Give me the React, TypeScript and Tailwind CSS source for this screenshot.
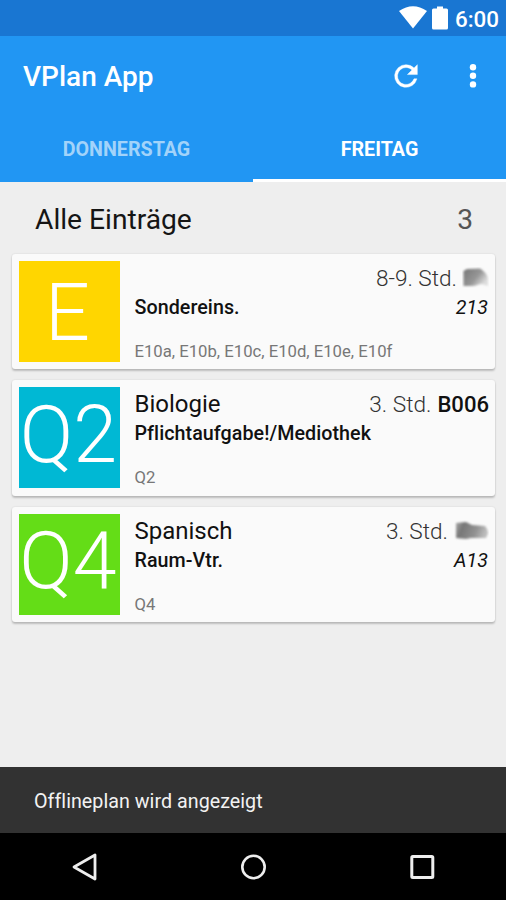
import type { ReactNode } from "react";

type Entry = {
  grade: string;
  gradeClass: string;
  tile: string;
  subject: string;
  lesson: string;
  teacher: ReactNode;
  info: string;
  room: string;
  classes: string;
};

function SmudgeA() {
  return (
    <svg width="27" height="22" viewBox="0 0 27 22" className="ml-[5px] shrink-0 self-center">
      <defs>
        <linearGradient id="sa" x1="0" y1="0" x2="1" y2="0.6">
          <stop offset="0" stopColor="#777" />
          <stop offset="0.6" stopColor="#969696" />
          <stop offset="1" stopColor="#dedede" />
        </linearGradient>
        <filter id="ba"><feGaussianBlur stdDeviation="0.8" /></filter>
      </defs>
      <path d="M1.500 4L5 2L18 1.500Q24 5 26 11L26 19L19 17L12 19L1.500 19Z" fill="url(#sa)" filter="url(#ba)" />
    </svg>
  );
}

function SmudgeB() {
  return (
    <svg width="35" height="22" viewBox="0 0 35 22" className="ml-[6px] shrink-0 self-center">
      <defs>
        <linearGradient id="sb" x1="0" y1="0" x2="1" y2="0.2">
          <stop offset="0" stopColor="#aaa" />
          <stop offset="0.25" stopColor="#777" />
          <stop offset="0.7" stopColor="#929292" />
          <stop offset="1" stopColor="#bcbcbc" />
        </linearGradient>
        <filter id="bb"><feGaussianBlur stdDeviation="1" /></filter>
      </defs>
      <path d="M2 3L12 2L18 5L31 6Q34 9 34 13L32 18L17 18L12 19L2 18Z" fill="url(#sb)" filter="url(#bb)" />
    </svg>
  );
}

const entries: Entry[] = [
  {
    grade: "E", gradeClass: "pt-[4px] pr-[4px]", tile: "bg-[#ffd600]",
    subject: "", lesson: "8-9. Std.", teacher: <SmudgeA />,
    info: "Sondereins.", room: "213",
    classes: "E10a, E10b, E10c, E10d, E10e, E10f",
  },
  {
    grade: "Q2", gradeClass: "pb-[5px] pr-[2px]", tile: "bg-[#00b8d4]",
    subject: "Biologie", lesson: "3. Std.",
    teacher: <span className="ml-[6px] text-[22.1px] font-medium text-[#111]">B006</span>,
    info: "Pflichtaufgabe!/Mediothek", room: "",
    classes: "Q2",
  },
  {
    grade: "Q4", gradeClass: "pb-[5px] pr-[3px]", tile: "bg-[#64dd17]",
    subject: "Spanisch", lesson: "3. Std.", teacher: <SmudgeB />,
    info: "Raum-Vtr.", room: "A13",
    classes: "Q4",
  },
];

function EntryCard({ e }: { e: Entry }) {
  return (
    <article className="flex h-[115.5px] rounded-[3px] bg-[#fafafa] px-[7px] pt-[7px] shadow-[0_2px_2px_rgba(0,0,0,0.2),0_0_2px_rgba(0,0,0,0.12)]">
      <div className={`flex h-[101px] w-[101px] shrink-0 items-center justify-center overflow-hidden text-[79px] leading-[101px] font-light text-white ${e.tile}`}>
        <span className={e.gradeClass}>{e.grade}</span>
      </div>
      <div className="ml-[14.5px] flex min-w-0 grow flex-col">
        <div className="flex h-[35px] items-baseline justify-between text-[24px] leading-[35px] whitespace-nowrap">
          <span className="text-[#111]">{e.subject}</span>
          <span className="-mr-px flex items-baseline text-[22.6px] text-[#333]">
            <span className="font-light">{e.lesson}</span>
            {e.teacher}
          </span>
        </div>
        <div className="flex h-6 justify-between text-[19.7px] leading-6 whitespace-nowrap text-[#111]">
          <span className="font-medium tracking-[0.05px]">{e.info}</span>
          <span className="italic">{e.room}</span>
        </div>
        <div className="mt-[22px] h-5 text-[16.7px] leading-5 whitespace-nowrap text-[#777]">
          {e.classes}
        </div>
      </div>
    </article>
  );
}

export default function App() {
  return (
    <div className="flex h-[900px] w-[506px] flex-col overflow-hidden bg-[#eee] font-[Roboto,sans-serif]">
      <div className="flex h-9 shrink-0 items-center justify-end bg-[#1976d2] pr-[7px] text-white">
        <svg width="28" height="24" viewBox="0 0 28 24" className="mr-[5px]">
          <path d="M0 5Q14 -4.500 28 5L14 22.500Z" fill="#fff" />
        </svg>
        <svg width="16" height="24" viewBox="0 0 16 24" className="mr-[7px]">
          <path d="M5 0.500H11V2.500H14.500Q16 2.500 16 4V22Q16 23.500 14.500 23.500H1.500Q0 23.500 0 22V4Q0 2.500 1.500 2.500H5Z" fill="#fff" />
        </svg>
        <span className="pt-[3px] text-[22.4px] leading-[33px] font-medium">6:00</span>
      </div>

      <header className="flex h-[146px] shrink-0 flex-col bg-[#2196f3] text-white">
        <div className="flex h-20 items-center pl-[23px]">
          <h1 className="grow pt-[2px] text-[28px] leading-[78px] font-medium">VPlan App</h1>
          <svg width="34" height="34" viewBox="0 0 24 24" className="mr-[46px]">
            <path d="M17.650 6.350A7.958 7.958 0 0 0 12 4a8 8 0 1 0 7.730 10h-2.080A6 6 0 1 1 12 6c1.660 0 3.140.690 4.220 1.780L13 11h7V4z" fill="#fff" stroke="#fff" strokeWidth="0.3" />
          </svg>
          <svg width="8" height="24" viewBox="0 0 8 24" className="mr-[29px]">
            <circle cx="4" cy="3.200" r="3.200" fill="#fff" />
            <circle cx="4" cy="11.800" r="3.200" fill="#fff" />
            <circle cx="4" cy="20.400" r="3.200" fill="#fff" />
          </svg>
        </div>
        <nav className="grid h-[66px] grid-cols-2 text-center text-[19.7px] font-bold">
          <span className="h-[66px] pt-[2px] leading-[64px] text-[#a2d3fa]">DONNERSTAG</span>
          <span className="h-[66px] border-b-[3px] border-white pt-[2px] leading-[64px]">FREITAG</span>
        </nav>
      </header>

      <main className="flex grow flex-col px-3 pr-[11px]">
        <div className="flex h-[71.500px] items-center justify-between pt-[5px] pr-[22px] pl-[23px] text-[28.2px]">
          <h2 className="text-[#151515]">Alle Einträge</h2>
          <span className="text-[#555]">3</span>
        </div>
        <div className="flex flex-col gap-[11px]">
          {entries.map((e) => <EntryCard key={e.grade} e={e} />)}
        </div>
      </main>

      <div className="flex h-[66px] shrink-0 items-center bg-[#323232] pt-[3px] pl-[34px] text-[19.7px] tracking-[0.03px] text-[#f2f2f2]">
        Offlineplan wird angezeigt
      </div>
      <footer className="grid h-[67px] shrink-0 grid-cols-3 items-center justify-items-center bg-black">
        <svg width="28" height="30" viewBox="0 0 28 30"><path d="M25 3V27L4 15Z" fill="none" stroke="#eee" strokeWidth="2.800" strokeLinejoin="round" /></svg>
        <svg width="28" height="28" viewBox="0 0 28 28"><circle cx="14.500" cy="14" r="11.200" fill="none" stroke="#eee" strokeWidth="2.600" /></svg>
        <svg width="28" height="28" viewBox="0 0 28 28"><rect x="3.800" y="3.500" width="21" height="21" rx="1" fill="none" stroke="#eee" strokeWidth="3" /></svg>
      </footer>
    </div>
  );
}
